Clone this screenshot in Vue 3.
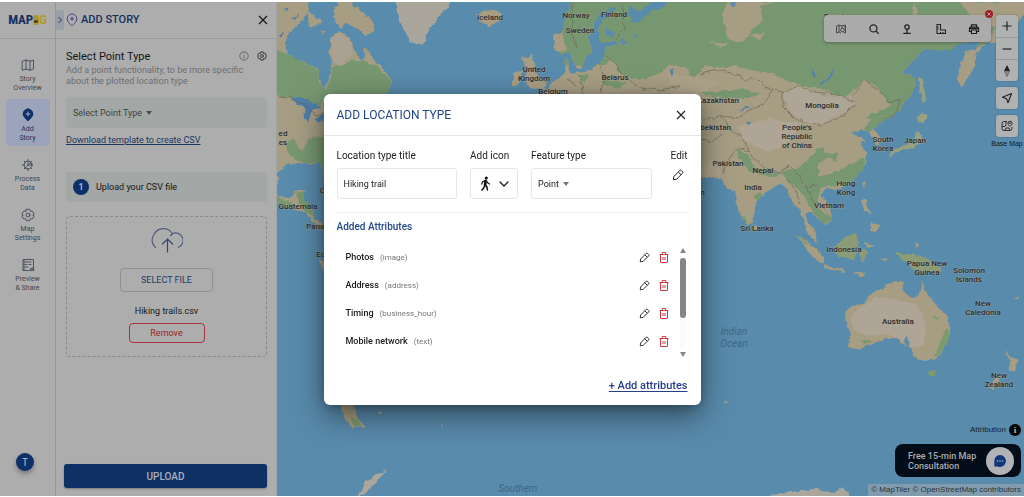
<script setup>
import { ref } from 'vue'

const title = ref('Hiking trail')
const feature = ref('Point')
const pointType = ref('Select Point Type')

const nav = [
  { id: 'story', lines: ['Story', 'Overview'] },
  { id: 'add', lines: ['Add', 'Story'], active: true },
  { id: 'process', lines: ['Process', 'Data'] },
  { id: 'settings', lines: ['Map', 'Settings'] },
  { id: 'preview', lines: ['Preview', '& Share'] }
]

const attributes = [
  { name: 'Photos', type: 'image' },
  { name: 'Address', type: 'address' },
  { name: 'Timing', type: 'business_hour' },
  { name: 'Mobile network', type: 'text' }
]

const labels = [
  { x: 490, y: 20, t: ['Iceland'] },
  { x: 576, y: 18, t: ['Norway'] },
  { x: 614, y: 17, t: ['Finland'] },
  { x: 580, y: 33, t: ['Sweden'] },
  { x: 534, y: 72, t: ['United', 'Kingdom'] },
  { x: 615, y: 80, t: ['Belarus'] },
  { x: 553, y: 94, t: ['Belgium'] },
  { x: 718, y: 103, t: ['Kazakhstan'] },
  { x: 711, y: 130, t: ['Uzbekistan'] },
  { x: 822, y: 108, t: ['Mongolia'] },
  { x: 797, y: 130, t: ["People's", 'Republic', 'of China'] },
  { x: 883, y: 142, t: ['South', 'Korea'] },
  { x: 915, y: 143, t: ['Japan'] },
  { x: 728, y: 166, t: ['Pakistan'] },
  { x: 763, y: 173, t: ['Nepal'] },
  { x: 753, y: 190, t: ['India'] },
  { x: 846, y: 186, t: ['Hong', 'Kong'] },
  { x: 829, y: 208, t: ['Vietnam'] },
  { x: 757, y: 231, t: ['Sri Lanka'] },
  { x: 844, y: 252, t: ['Indonesia'] },
  { x: 927, y: 266, t: ['Papua New', 'Guinea'] },
  { x: 969, y: 273, t: ['Solomon', 'Islands'] },
  { x: 983, y: 306, t: ['New', 'Caledonia'] },
  { x: 898, y: 324, t: ['Australia'] },
  { x: 999, y: 378, t: ['New', 'Zealand'] },
  { x: 298, y: 209, t: ['Guatemala'] },
  { x: 321, y: 229, t: ['Panama'] },
  { x: 331, y: 257, t: ['Ecuador'] },
  { x: 283, y: 136, t: ['ed', 'es'] },
  { x: 694, y: 195, t: ['Oman'] },
  { x: 836, y: 19, t: ['Russia'] },
  { x: 329, y: 193, t: ['Cuba'] }
]

const oceans = [
  { x: 734, y: 335, t: ['Indian', 'Ocean'] },
  { x: 518, y: 492, t: ['Southern'] }
]
</script>

<template>
  <div class="app">
    <nav class="rail" aria-label="Main">
      <div class="brand">
        <span class="brand-a">MAP</span>
        <svg class="brand-o" viewBox="0 0 6 12" aria-hidden="true">
          <rect x="0" y="1" width="6" height="10" rx="2" fill="#b39a2c" />
          <circle cx="3" cy="4" r="1" fill="#8c8c8c" />
          <rect x="1" y="6" width="4" height="3" rx="1" fill="#4b4a30" />
        </svg>
        <span class="brand-b">G</span>
      </div>
      <div class="rail-items">
        <button v-for="n in nav" :key="n.id" type="button" class="rail-item" :class="{ active: n.active }">
          <svg class="rail-icon" viewBox="0 0 14 14" fill="none" stroke="#4c525f" stroke-width="1" stroke-linejoin="round" stroke-linecap="round" aria-hidden="true">
            <template v-if="n.id === 'story'">
              <path d="M1.5 3.2 5 2l4 1.2L12.500 2v9L9 12.200 5 11l-3.500 1.200zM5 2v9M9 3.200v9" />
            </template>
            <template v-else-if="n.id === 'add'">
              <path d="M7 1a4.800 4.800 0 0 0-4.800 4.800C2.200 9 7 13 7 13s4.800-4 4.800-7.200A4.800 4.800 0 0 0 7 1z" fill="#0d2f66" stroke="#0d2f66" />
              <path d="M7 4v4M5 6h4" stroke="#a6b0cc" />
            </template>
            <template v-else-if="n.id === 'process'">
              <circle cx="7" cy="7" r="4" />
              <path d="M7 7V4.500M7 7h4M7 7l-2 2.500M7 1.500V3M7 11v1.500M1.500 7H3M3.200 3.200l1 1M3.200 10.800l1-1M10.800 3.200l-1 1M10.800 10.800l-1-1M9 4v2h2" />
            </template>
            <template v-else-if="n.id === 'settings'">
              <path d="M5.300 1.300h3.400l.6 2 2-.3 1.900 3L11.800 7l1.400 1-1.900 3-2-.3-.6 2H5.300l-.6-2-2 .3L.8 8l1.400-1L.8 6l1.900-3 2 .3z" />
              <circle cx="7" cy="7" r="2" />
            </template>
            <template v-else>
              <path d="M8 12.500H2v-11h10.500V8M4 4h6M4 6.500h2M8 6.500h2M4 9h3M3 1.500v11" />
              <path d="M9.500 12.500V11M11 12.500v-2.500M12.500 12.500V9" stroke-width="1.300" />
            </template>
          </svg>
          <span v-for="l in n.lines" :key="l" class="rail-line">{{ l }}</span>
        </button>
      </div>
      <button type="button" class="avatar" aria-label="Account">T</button>
    </nav>

    <aside class="side">
      <header class="side-head">
        <button type="button" class="collapse" aria-label="Collapse panel">
          <svg viewBox="0 0 6 8" width="6" height="8"><path d="M1.500 1l3 3-3 3" fill="none" stroke="#243763" stroke-width="1" /></svg>
        </button>
        <svg class="pin" viewBox="0 0 12 14" fill="none" stroke="#4b4383" stroke-width="1" aria-hidden="true">
          <path d="M6 1a4.800 4.800 0 0 0-4.800 4.800C1.200 9 6 13 6 13s4.800-4 4.800-7.200A4.800 4.800 0 0 0 6 1zM6 3.800v4M4 5.800h4" />
        </svg>
        <h1>ADD STORY</h1>
        <button type="button" class="x" aria-label="Close panel">
          <svg viewBox="0 0 10 10" width="10" height="10"><path d="M1 1l8 8M9 1L1 9" stroke="#171717" stroke-width="1.300" /></svg>
        </button>
      </header>

      <div class="side-body">
        <div class="row-title">
          <h2>Select Point Type</h2>
          <svg viewBox="0 0 10 10" class="ic10" fill="none" stroke="#555" stroke-width=".8"><circle cx="5" cy="5" r="4.200" /><path d="M5 4.400v3M5 2.500v.9" /></svg>
          <svg viewBox="0 0 14 14" class="ic10" fill="none" stroke="#2c2c2c" stroke-width="1.200" stroke-linejoin="round"><path d="M5.300 1.300h3.400l.6 2 2-.3 1.900 3L11.800 7l1.400 1-1.900 3-2-.3-.6 2H5.300l-.6-2-2 .3L.8 8l1.400-1L.8 6l1.900-3 2 .3z" /><circle cx="7" cy="7" r="2" /></svg>
        </div>
        <p class="desc">Add a point functionality, to be more specific<br>about the plotted location type</p>
        <label class="type-box">
          <select v-model="pointType" aria-label="Point type"><option>Select Point Type</option></select>
          <svg viewBox="0 0 6 4" class="caret"><path d="M0 0h6L3 4z" fill="#4a4f4e" /></svg>
        </label>
        <a class="dl" href="#">Download template to create CSV</a>
        <div class="step"><span class="num">1</span>Upload your CSV file</div>
        <div class="drop">
          <svg class="cloud" viewBox="0 0 32 27" fill="none" stroke="#4f5c7b" stroke-width="1.200" stroke-linecap="round" aria-hidden="true">
            <path d="M4.500 21.500A9.500 9.500 0 0 1 3 8.500 10.500 10.500 0 0 1 21.500 8a8 8 0 0 1-2 1.500M21.500 7.500a7.500 7.500 0 0 1 6 13.800" />
            <path d="M16.500 26V13M11.500 18l5-5 5 5" stroke="#35466f" />
          </svg>
          <button type="button" class="select-file">SELECT FILE</button>
          <span class="fname">Hiking trails.csv</span>
          <button type="button" class="remove">Remove</button>
        </div>
        <button type="button" class="upload">UPLOAD</button>
      </div>
    </aside>

    <main class="map">
      <svg class="world" viewBox="277 2 747 494" preserveAspectRatio="xMidYMid slice" role="img" aria-label="World map">
        <defs>
          <filter id="coast" x="-5%" y="-5%" width="110%" height="110%">
            <feTurbulence type="fractalNoise" baseFrequency=".16" numOctaves="3" seed="4" />
            <feDisplacementMap in="SourceGraphic" scale="5" xChannelSelector="R" yChannelSelector="G" />
          </filter>
          <clipPath id="eurasia">
            <path d="M572 0L562 32L553 36L555 50L562 55L570 51L574 62L578 70L582 68L585 57L592 52L588 38L594 24L600 12L604 16L598 32L600 43L616 41L620 44L606 48L603 58L598 65L590 70L575 73L569 72L568 58L564 60L566 73L555 80L548 88L540 96L540 178L720 178L725 185L731 192L735 190L737 205L742 218L747 226L753 222L755 210L757 200L768 190L780 184L786 187L790 195L793 205L800 210L804 222L806 230L812 238L818 245L815 233L808 222L806 212L812 212L820 222L824 225L832 218L830 208L822 195L825 188L835 190L845 186L858 176L865 165L866 152L860 143L866 140L858 136L852 134L860 130L868 131L873 140L877 145L882 142L878 133L872 128L883 122L895 115L905 103L914 90L916 78L903 73L912 62L923 50L953 50L957 43L980 42L975 50L966 52L960 63L958 77L961 88L968 78L974 67L977 53L986 43L995 43L1013 27L1026 13V0Z" />
          </clipPath>
        </defs>
        <rect x="0" y="-200" width="1400" height="900" fill="#598bac" />
        <g filter="url(#coast)">
          <g clip-path="url(#eurasia)">
            <rect x="530" y="0" width="500" height="250" fill="#a69d83" />
            <path fill="#779770" d="M540 0H1000L998 24L985 44L957 52H923L903 73L918 78L916 92L896 116L868 132L862 128L884 112L892 104L884 98L876 86L864 80L856 88L845 97L825 90L805 86L790 82L770 72L755 71L735 66L720 68L705 65L693 82L686 67L670 65L655 75L640 80L622 74L612 60L600 66L590 66L540 64Z" />
            <path fill="#a69d83" d="M728 2L722 16L728 40L742 42L752 30L763 20L760 6L775 2ZM710 42L728 44L722 48ZM748 36L766 33L760 39ZM550 35L562 30L566 50L555 54ZM960 2H1026V20L1004 36L992 26L972 18ZM914 0L912 16L918 14Z" />
            <path fill="#aea597" d="M782 92L800 86L825 96L850 97L856 104L838 116L810 125L790 112ZM738 126L770 118L800 124L790 142L770 152L742 140Z" />
            <path fill="#779770" d="M780 172L800 168L817 150L838 154L835 162L827 157L818 163V177L833 173L864 158V172L846 185L823 187L815 206L831 218L823 225L810 207L800 190L788 182ZM737 148L750 157L754 168L780 172L774 178L750 172L738 158ZM866 118L886 108L895 112L878 124ZM754 196L762 193L760 198L754 200ZM815 148H824V154H815ZM740 212L747 224L743 222Z" />
            <path fill="#779770" d="M700 92L730 91L742 88L760 94L748 98L724 98L708 96ZM600 80L626 82L620 88L606 86ZM576 76L590 74L584 82Z" />
            <path fill="#b0a48c" d="M700 168L712 160L722 172L716 178H700ZM668 74L700 78L720 82L700 94H670Z" opacity=".7" />
            <g fill="#598bac">
              <path d="M628 6L640 12L650 2H668L662 8L646 14L640 22L632 22ZM606 28L614 32L612 38L606 36ZM620 38L628 42L622 46ZM730 2H738L732 8ZM634 32L638 36L635 40ZM604 14L612 6L616 8L606 20Z" />
              <path d="M818 86L828 78L834 68L832 76L824 84ZM811 66L816 76L813 78ZM738 112L746 106L752 107L744 109ZM745 122L752 122L748 125ZM670 70L674 68L672 78Z" fill="#5581a8" />
            </g>
            <path fill="none" stroke="#6d675f" stroke-width=".7" d="M700 74L718 70L735 74L745 80L758 78L768 88L782 92L800 86L812 92L838 94L846 98L856 104L840 118L820 125L796 120L782 106V92M852 96L864 80L880 92L890 102L900 99L896 114L884 120M705 120L722 116L740 118L750 110L764 104L772 90M722 116L730 130L742 138L750 152L738 148L728 160L722 174M750 154L765 168L780 172L790 166L798 174L806 188L818 184M786 178L794 188L800 204M806 184L812 200L822 206L830 216M700 140L712 142L722 134M598 52L612 60L624 76L640 88L660 90L680 86M572 4V30L576 48M622 4L624 28L616 40M600 66L606 78L600 92M580 76L584 94M568 80L576 86" />
          </g>

          <!-- North and Central America -->
          <path fill="#a69d83" d="M270 0H308L310 10L303 20L296 27L288 34L285 44L287 53L295 58L306 63L318 68L319 80L325 88L328 80L332 65L329 52L332 36L340 31L350 38L353 47L358 57L363 63L365 48L370 53L377 63L385 71L391 80L389 90L380 98H324V180L320 161L310 165L298 163L285 165L278 172V196L290 197L296 191L305 191L303 200L313 208L315 218L324 225L320 227L311 220L306 213L290 208L270 200Z" />
          <path fill="#779770" d="M270 48L284 52L296 58L306 64L318 69L319 82L326 90L330 80L333 66L345 64L352 60L364 62L378 66L390 80L389 92L372 98H324L320 108L308 104L296 98L285 98L270 92ZM285 146L292 138L297 145L302 152L310 138L324 136V178L320 161L306 164L292 158ZM296 192H305L303 200L312 207L316 218L308 214L300 204ZM270 190L280 198L294 204L288 207L270 201Z" />
          <path fill="#aaa192" d="M332 38L340 33L350 40L353 54L344 62L334 64L330 52Z" />
          <path fill="#a69d83" d="M335 7L350 2L362 12L372 20L375 30L367 35L357 29L346 23L340 28L334 18ZM309 12L316 18L322 22L312 28L308 22ZM337 2H352L350 8L342 12ZM320 30L326 32L322 35Z" />
          <path fill="#a69d83" d="M364 48L371 56L380 66L368 64Z" />
          <path fill="#4f7fac" d="M291 98L302 97L314 103L320 108L312 110L308 122L303 118L306 108L297 104ZM314 120L324 113V118L318 124Z" />
          <path fill="none" stroke="#6d675f" stroke-width=".7" d="M277 97L290 98L304 104L316 116L324 112" />
          <path fill="#4f7fac" d="M279 36L284 30L282 38ZM292 18L298 13L295 20ZM282 8L290 6L286 10Z" />

          <!-- Greenland, Iceland, British Isles -->
          <path fill="#aaa69c" d="M395 0L398 17L403 28L410 42L422 46L425 40L430 27L440 15L454 0Z" />
          <path fill="#a69d83" d="M476 14L484 12L490 9L503 14L502 19L490 26L479 22ZM522 57L532 55L535 63L533 70L542 78L547 84L543 90L530 88L525 80L527 68ZM513 72L522 71L520 83L513 87Z" />

          <!-- East Asia islands -->
          <path fill="#98a07e" d="M918 78L923 80L926 100L922 104L920 90ZM917 117L922 113L929 116L924 123L918 122ZM917 130L922 141L913 148L903 150L895 153L890 157L892 149L905 145L914 138ZM862 182L866 183L863 188Z" />
          <path fill="#a69d83" d="M861 200L868 200L867 208L872 215L864 209ZM872 223L879 225L877 233L870 230ZM753 222L758 228L755 231Z" />
          <path fill="#a69d83" d="M796 235L804 239L815 248L824 257L824 264L814 259L806 248ZM823 265L846 270L844 272L825 269ZM852 272L866 274L860 276ZM863 243L875 246L868 248ZM880 258L890 259L884 261ZM915 240L919 246L916 248Z" />
          <path fill="#8b9b76" d="M835 247L843 240L855 233L858 238L860 250L853 259L843 258L835 254ZM860 250L868 250L864 262L861 262L860 256ZM893 252L900 253L916 255L934 261L942 271L938 274L926 271L914 270L904 261ZM796 235L804 239L810 245L804 244Z" />

          <!-- Oceania -->
          <path fill="#a69d83" d="M845 312L850 307L865 302L870 295L877 290L883 290L887 284L896 281L905 283L902 290L912 298L918 297L922 281L926 293L933 300L938 307L948 317L950 333L943 350L935 360H920L913 355L911 347L905 348L900 340L887 338L873 343L857 349L849 347L850 333L846 320Z" />
          <path fill="#aea597" d="M864 306L876 296L896 300L912 302L922 312L926 328L924 345L914 348L904 342L888 334L868 336L854 330L850 316Z" />
          <path fill="#7d9a6c" d="M946 328L950 335L943 350L934 358L938 348ZM860 340L872 340L864 345ZM848 345L852 347L851 350ZM932 316L940 318L936 321ZM929 371L936 370L934 377L930 377Z" />
          <path fill="#598bac" d="M906 336L910 340L909 350L904 345Z" />
          <path fill="#a69d83" d="M1005 350L1010 357L1018 360L1015 370L1008 372L1010 363ZM1005 372L1000 380L992 390L987 388L994 380ZM1014 299L1019 295L1017 299Z" />

          <!-- South America and Antarctica -->
          <path fill="#a69d83" d="M338 400H354L357 417L365 427L353 428L345 420ZM320 258L326 262V276L321 268Z" />
          <path fill="#7d9a6c" d="M350 418L358 420L362 426L354 427Z" />
          <path fill="#aaa69c" d="M356 500L366 482L376 475L387 470L378 480L366 492ZM766 497L780 493L810 490L817 488L833 493L843 487L849 493V500ZM377 411L384 412L380 414ZM724 401L729 402L726 403ZM440 423L444 426L442 427Z" />
        </g>
        <g class="labels">
          <text v-for="l in labels" :key="l.t[0] + l.x" :x="l.x" :y="l.y">
            <tspan v-for="(s, i) in l.t" :key="s" :x="l.x" :dy="i ? 9 : 0">{{ s }}</tspan>
          </text>
        </g>
        <g class="oceans">
          <text v-for="o in oceans" :key="o.t[0]" :x="o.x" :y="o.y">
            <tspan v-for="(s, i) in o.t" :key="s" :x="o.x" :dy="i ? 12 : 0">{{ s }}</tspan>
          </text>
        </g>
      </svg>

      <div class="toolbar">
        <button type="button" aria-label="Layers">
          <svg viewBox="0 0 12 12" fill="none" stroke="#3c3c3c" stroke-width=".9"><path d="M1.500 10V3L4 2l3 1 3-1v3M1.500 10L4 9l2 1M4 2v7M7 3v2M10.500 2v8l-2-.5" /><circle cx="7.500" cy="7" r="1.800" /></svg>
        </button>
        <button type="button" aria-label="Search">
          <svg viewBox="0 0 12 12" fill="none" stroke="#222" stroke-width="1.300"><circle cx="5.400" cy="5.400" r="3.500" /><path d="M8 8l2.700 2.700" /></svg>
        </button>
        <button type="button" aria-label="Place marker">
          <svg viewBox="0 0 12 12" fill="none" stroke="#222" stroke-width="1.300"><circle cx="6" cy="4" r="2.200" /><path d="M6 6.200v4M2.300 10.300h7.400" /></svg>
        </button>
        <button type="button" aria-label="Measure">
          <svg viewBox="0 0 12 12" fill="none" stroke="#222" stroke-width="1.100"><path d="M2 1.500h3.500v5.500h5v3.500H2zM2 4h1.500M2 6h1.500M5.500 10.500V9M8 10.500V9" /></svg>
        </button>
        <button type="button" aria-label="Print">
          <svg viewBox="0 0 12 12" fill="none" stroke="#1c1c1c" stroke-width="1.200"><path d="M3.500 4V1.800h5V4M3.500 8.500h-2v-3.500q0-1 1-1h7q1 0 1 1v3.500h-2M3.500 7h5v3.500h-5z" /><path d="M2 5.300h8" stroke-width="1.600" /></svg>
        </button>
        <button type="button" class="badge" aria-label="Close toolbar">
          <svg viewBox="0 0 8 8"><path d="M2.500 2.500l3 3M5.500 2.500l-3 3" stroke="#c9a0a0" stroke-width=".9" /></svg>
        </button>
      </div>

      <div class="controls">
        <div class="stack">
          <button type="button" aria-label="Zoom in"><svg viewBox="0 0 12 12"><path d="M6 1.500v9M1.500 6h9" stroke="#222" stroke-width="1.200" /></svg></button>
          <button type="button" aria-label="Zoom out"><svg viewBox="0 0 12 12"><path d="M1.500 6h9" stroke="#222" stroke-width="1.200" /></svg></button>
          <button type="button" aria-label="Reset north"><svg viewBox="0 0 12 12"><path d="M6 0L9 6H3z" fill="#222" /><path d="M3.300 6h5.400L6 11.500z" fill="#8d8d8d" stroke="#444" stroke-width=".5" /></svg></button>
        </div>
        <div class="stack">
          <button type="button" aria-label="My location"><svg viewBox="0 0 12 12"><path d="M1.500 5.300L10.500 1.500 7 10.700 5.500 6.800z" fill="none" stroke="#222" stroke-width="1.100" stroke-linejoin="round" /></svg></button>
        </div>
        <div class="stack">
          <button type="button" aria-label="Base map"><svg viewBox="0 0 12 12" fill="none" stroke="#222" stroke-width=".9"><path d="M6 1.500H3q-2 0-2 2v5q0 2 2 2h6q2 0 2-2V7M1 6.500h3l1-2V1.500M4 10.500l1-2.500h3l1 2.500M9 6.500C7.500 5 7 4.200 7 3.200a2 2 0 0 1 4 0c0 1-.5 1.800-2 3.300z" /><circle cx="9" cy="3.200" r=".5" /></svg></button>
        </div>
        <span class="bm">Base Map</span>
      </div>

      <div class="attribution">Attribution <span class="info">i</span></div>
      <button type="button" class="consult">
        <span>Free 15-min Map<br>Consultation</span>
        <svg viewBox="0 0 28 28"><circle cx="14" cy="14" r="14" fill="#b0b2b5" /><path d="M14 8a6 6 0 1 1-2.500 11.500H8.300V14A5.900 5.900 0 0 1 14 8z" fill="#0f377a" /><g fill="#a9b5cc"><circle cx="11.500" cy="14" r=".8" /><circle cx="14" cy="14" r=".8" /><circle cx="16.500" cy="14" r=".8" /></g></svg>
      </button>
      <div class="credits">© MapTiler © OpenStreetMap contributors</div>
    </main>

    <div class="overlay">
      <section class="modal" role="dialog" aria-labelledby="dlg">
        <header class="modal-head">
          <h2 id="dlg">ADD LOCATION TYPE</h2>
          <button type="button" class="x" aria-label="Close">
            <svg viewBox="0 0 10 10" width="10" height="10"><path d="M1 1l8 8M9 1L1 9" stroke="#222" stroke-width="1.200" /></svg>
          </button>
        </header>
        <div class="modal-body">
          <div class="form">
            <div class="field grow">
              <label for="ttl">Location type title</label>
              <input id="ttl" v-model="title" class="box" type="text">
            </div>
            <div class="field">
              <label for="ico">Add icon</label>
              <button id="ico" type="button" class="box icon-btn" aria-label="Add icon">
                <svg viewBox="0 0 11 15" width="11" height="15" fill="none" stroke="#111" stroke-linecap="round" stroke-linejoin="round"><circle cx="6.300" cy="2" r="1.500" fill="#111" stroke="none" /><path d="M5.700 4.800L5 9" stroke-width="2.600" /><path d="M5 9l-1 2.500-2 2.500M5.500 9L7 11l.4 3" stroke-width="1.500" /><path d="M5 4.600L2.400 6 1.800 8.200M6.600 5l1.200 2L9.600 8" stroke-width="1.200" /></svg>
                <svg viewBox="0 0 10 6" width="10" height="6"><path d="M1 1l4 4 4-4" fill="none" stroke="#222" stroke-width="1.400" stroke-linecap="round" /></svg>
              </button>
            </div>
            <div class="field grow">
              <label for="feat">Feature type</label>
              <div class="box">
                <select id="feat" v-model="feature"><option>Point</option></select>
                <svg viewBox="0 0 6 4" class="caret"><path d="M0 0h6L3 4z" fill="#777" /></svg>
              </div>
            </div>
            <div class="field edit">
              <label for="edit">Edit</label>
              <button id="edit" type="button" class="plain">
                <svg viewBox="0 0 12 12" width="12" height="12"><path d="M1.300 10.700L1.800 7.600 7.700 1.500Q8.600.8 9.500 1.700L10.500 2.700Q11.200 3.500 10.500 4.300L4.500 10.300zM6.300 3L9 5.700" fill="none" stroke="#222" stroke-width="1" stroke-linejoin="round" /></svg>
              </button>
            </div>
          </div>
          <h3>Added Attributes</h3>
          <div class="list">
            <ul>
              <li v-for="a in attributes" :key="a.name">
                <b>{{ a.name }}</b><i>({{ a.type }})</i>
                <button type="button" class="plain" :aria-label="'Edit ' + a.name">
                  <svg viewBox="0 0 12 12" width="11" height="11"><path d="M1.300 10.700L1.800 7.600 7.700 1.500Q8.600.8 9.500 1.700L10.500 2.700Q11.200 3.500 10.500 4.300L4.500 10.300zM6.300 3L9 5.700" fill="none" stroke="#222" stroke-width="1" stroke-linejoin="round" /></svg>
                </button>
                <button type="button" class="plain" :aria-label="'Delete ' + a.name">
                  <svg viewBox="0 0 10 11" width="10" height="11"><path d="M.5 2.500h9M3.300 2.500v-2h3.400v2M1.500 2.500v8h7v-8M4 5v3M6 5v3" fill="none" stroke="#cf3c43" stroke-width="1" /></svg>
                </button>
              </li>
            </ul>
            <div class="bar" aria-hidden="true">
              <svg viewBox="0 0 6 5" width="6" height="5"><path d="M3 0l3 5H0z" fill="#858585" /></svg>
              <div class="track"><div class="thumb"></div></div>
              <svg viewBox="0 0 6 5" width="6" height="5"><path d="M3 5l3-5H0z" fill="#858585" /></svg>
            </div>
          </div>
          <a class="add" href="#">+ Add attributes</a>
        </div>
      </section>
    </div>
  </div>
</template>

<style>
body { background: #fff; }
</style>

<style scoped>
* { box-sizing: border-box; }
.app {
  min-height: 100vh;
  padding: 2px 0 1px;
  display: grid;
  grid-template-columns: 56px 221px 1fr;
  font-family: Roboto, "Liberation Sans", sans-serif;
  font-size: 9px;
  color: #222;
}
h1, h2, h3, p, ul { margin: 0; padding: 0; }
button, input, select { font: inherit; color: inherit; }
button { border: 0; padding: 0; background: none; cursor: pointer; display: flex; align-items: center; justify-content: center; }
svg { display: block; flex: none; }
select { appearance: none; border: 0; background: none; padding: 0; field-sizing: content; outline: 0; }

.rail { background: #adadad; border-right: 1px solid #979797; display: flex; flex-direction: column; align-items: center; }
.brand { align-self: stretch; height: 37px; border-bottom: 1px solid #9b9b9b; display: flex; align-items: center; justify-content: center; font: 700 13px/16px "Liberation Sans Narrow", "Roboto Condensed", Roboto, sans-serif; }
.brand-a { color: #15305f; }
.brand-b { color: #b39a2c; }
.brand-o { width: 6px; height: 12px; }
.rail-items { margin-top: 10px; display: flex; flex-direction: column; gap: 3px; }
.rail-item { width: 44px; padding: 9px 0 3px; border-radius: 4px; flex-direction: column; font-size: 7px; line-height: 9px; color: #41454e; }
.rail-icon { width: 14px; height: 14px; margin-bottom: 3px; }
.rail-item.active { background: #9ba4bb; color: #1b3160; }
.avatar { margin: auto 5px 25px 0; width: 18px; height: 18px; border-radius: 50%; background: #0e3068; color: #b9c0cc; font-size: 10px; box-shadow: 0 3px 5px rgba(0, 0, 0, .3); }

.side { background: #adadad; border-right: 1px solid #a2a5a7; display: flex; flex-direction: column; }
.side-head { height: 37px; border-bottom: 1px solid #9b9b9b; display: flex; align-items: center; padding-right: 8px; }
.collapse { width: 8px; height: 20px; background: #999ea9; border-radius: 0 2px 2px 0; }
.pin { width: 12px; height: 14px; margin: 0 3px 0 2px; }
h1 { font-size: 11px; line-height: 14px; font-weight: 500; color: #18305e; }
.x { margin-left: auto; width: 10px; height: 10px; }
.side-body { flex: 1; padding: 10px 9px 8px 10px; display: flex; flex-direction: column; }
.row-title { display: flex; align-items: center; gap: 8px; height: 14px; }
.row-title h2 { font-size: 11px; font-weight: 400; color: #151515; margin-right: auto; }
.ic10 { width: 10px; height: 10px; }
.desc { margin-top: 2px; line-height: 11px; color: #6c6f76; }
.type-box { margin-top: 10px; height: 31px; border: 1px solid #a4a8a7; border-radius: 4px; background: #a3a7a6; display: flex; align-items: center; gap: 4px; padding: 0 6px; color: #3f4443; }
.caret { width: 6px; height: 4px; }
.dl { margin-top: 6px; line-height: 12px; color: #1b365f; align-self: flex-start; text-underline-offset: 1px; }
.step { margin-top: 26px; height: 30px; background: #a3a7a6; border-radius: 2px; display: flex; align-items: center; gap: 7px; padding: 0 7px; color: #171717; }
.num { width: 16px; height: 16px; border-radius: 50%; background: #0d2f68; color: #b9c0cc; font-weight: 500; display: flex; align-items: center; justify-content: center; }
.drop { margin-top: 14px; border: 1px dashed #8b8b8b; border-radius: 4px; display: flex; flex-direction: column; align-items: center; padding: 9px 0 13px; }
.cloud { width: 32px; height: 27px; }
.select-file { margin-top: 15px; width: 93px; height: 24px; border: 1px solid #8b9099; border-radius: 4px; color: #203c69; }
.fname { margin-top: 13px; line-height: 12px; color: #191919; }
.remove { margin-top: 6px; width: 76px; height: 20px; border: 1px solid #a6343b; border-radius: 4px; color: #9e1f27; }
.upload { margin: auto 0 0 -2px; height: 24px; border-radius: 3px; background: #0e3065; color: #a9b1be; font-size: 10px; font-weight: 500; box-shadow: 0 1px 2px rgba(0, 0, 0, .3); }

.map { position: relative; overflow: hidden; background: #598bac; }
.world { position: absolute; inset: 0; width: 100%; height: 100%; }
.labels text { font-size: 8px; font-weight: 500; text-anchor: middle; fill: #2d2d2d; stroke: #aaa899; stroke-width: 1px; stroke-opacity: .5; paint-order: stroke; }
.oceans text { font-size: 10px; font-style: italic; text-anchor: middle; fill: #3f6786; }
.toolbar { position: absolute; top: 13px; right: 33px; width: 167px; height: 27px; border-radius: 4px; background: #aaabaa; box-shadow: 0 1px 3px rgba(0, 0, 0, .3); display: grid; grid-template-columns: repeat(5, 1fr); }
.toolbar svg { width: 12px; height: 12px; }
.toolbar .badge { position: absolute; top: -5px; right: -2px; width: 8px; height: 8px; border-radius: 50%; background: #9c2029; }
.toolbar .badge svg { width: 8px; height: 8px; }
.controls { position: absolute; top: 13px; right: 2px; width: 30px; display: flex; flex-direction: column; align-items: center; gap: 6px; }
.stack { width: 22px; background: #b0b1b1; border-radius: 3px; box-shadow: 0 0 2px rgba(0, 0, 0, .3); }
.stack button { width: 100%; height: 22px; }
.stack button + button { border-top: 1px solid #999; }
.stack svg { width: 12px; height: 12px; }
.bm { margin-top: -3px; font: 7px/8px "Liberation Sans", sans-serif; color: #0e1a22; white-space: nowrap; }
.attribution { position: absolute; right: 3px; bottom: 60px; display: flex; align-items: center; gap: 3px; font: 8px/12px "Liberation Sans", sans-serif; color: #17242d; }
.info { width: 12px; height: 12px; border-radius: 50%; background: #060606; color: #bbb; font: 700 9px/12px "Liberation Serif", serif; text-align: center; }
.consult { position: absolute; right: 3px; bottom: 19px; width: 126px; height: 33px; border-radius: 8px; background: #020d19; color: #a9adb1; justify-content: space-between; padding: 0 7px 0 13px; text-align: left; font-weight: 500; line-height: 10px; }
.consult svg { width: 28px; height: 28px; }
.credits { position: absolute; right: 0; bottom: 0; padding: 0 3px; background: rgba(174, 174, 174, .5); font: 8px/12px "Liberation Sans", sans-serif; color: #2b3438; }

.overlay { position: fixed; inset: 0; display: flex; align-items: center; justify-content: center; padding-top: 2px; }
.modal { width: 377px; background: #fff; border-radius: 6px; box-shadow: 0 10px 30px rgba(0, 0, 0, .5), 0 2px 8px rgba(0, 0, 0, .2); }
.modal-head { height: 42px; border-bottom: 1px solid #e6e6e6; display: flex; align-items: center; padding: 0 15px 0 13px; }
.modal-head h2 { font-size: 12px; line-height: 16px; font-weight: 400; color: #1f4387; }
.modal-body { padding: 13px 13px 12px; display: flex; flex-direction: column; }
.form { display: flex; gap: 13px; padding-bottom: 13px; border-bottom: 1px solid #ebebeb; }
.field { display: flex; flex-direction: column; }
.field label { font-size: 10px; line-height: 14px; margin-bottom: 5px; white-space: nowrap; }
.grow { flex: 1; min-width: 0; }
.box { width: 100%; height: 31px; border: 1px solid #e6e6e6; border-radius: 3px; padding: 0 6px; display: flex; align-items: center; gap: 4px; background: #fff; outline: 0; color: #222; }
.icon-btn { width: 48px; justify-content: center; gap: 8px; }
.edit { margin-left: 6px; align-items: center; }
.edit .plain { height: 14px; margin-right: 2px; }
h3 { margin-top: 7px; font-size: 10px; line-height: 14px; font-weight: 500; color: #234a86; }
.list { margin-top: 9px; display: flex; align-items: stretch; }
.list ul { flex: 1; list-style: none; padding-bottom: 4px; }
.list li { height: 28px; display: flex; align-items: center; padding: 0 10px 0 9px; }
.list b { font-weight: 500; color: #1c1c1c; }
.list i { font-style: normal; font-size: 8px; color: #777; margin: 0 auto 0 6px; }
.list .plain { width: 11px; margin-left: 9px; }
.bar { width: 6px; margin: 5px 2px 2px 0; display: flex; flex-direction: column; align-items: center; gap: 5px; }
.track { flex: 1; width: 6px; background: #fafafa; }
.thumb { height: 60px; border-radius: 3px; background: #858585; }
.add { margin-top: 20px; align-self: flex-end; font-size: 11px; line-height: 14px; font-weight: 500; color: #273f88; text-underline-offset: 2px; }
</style>
